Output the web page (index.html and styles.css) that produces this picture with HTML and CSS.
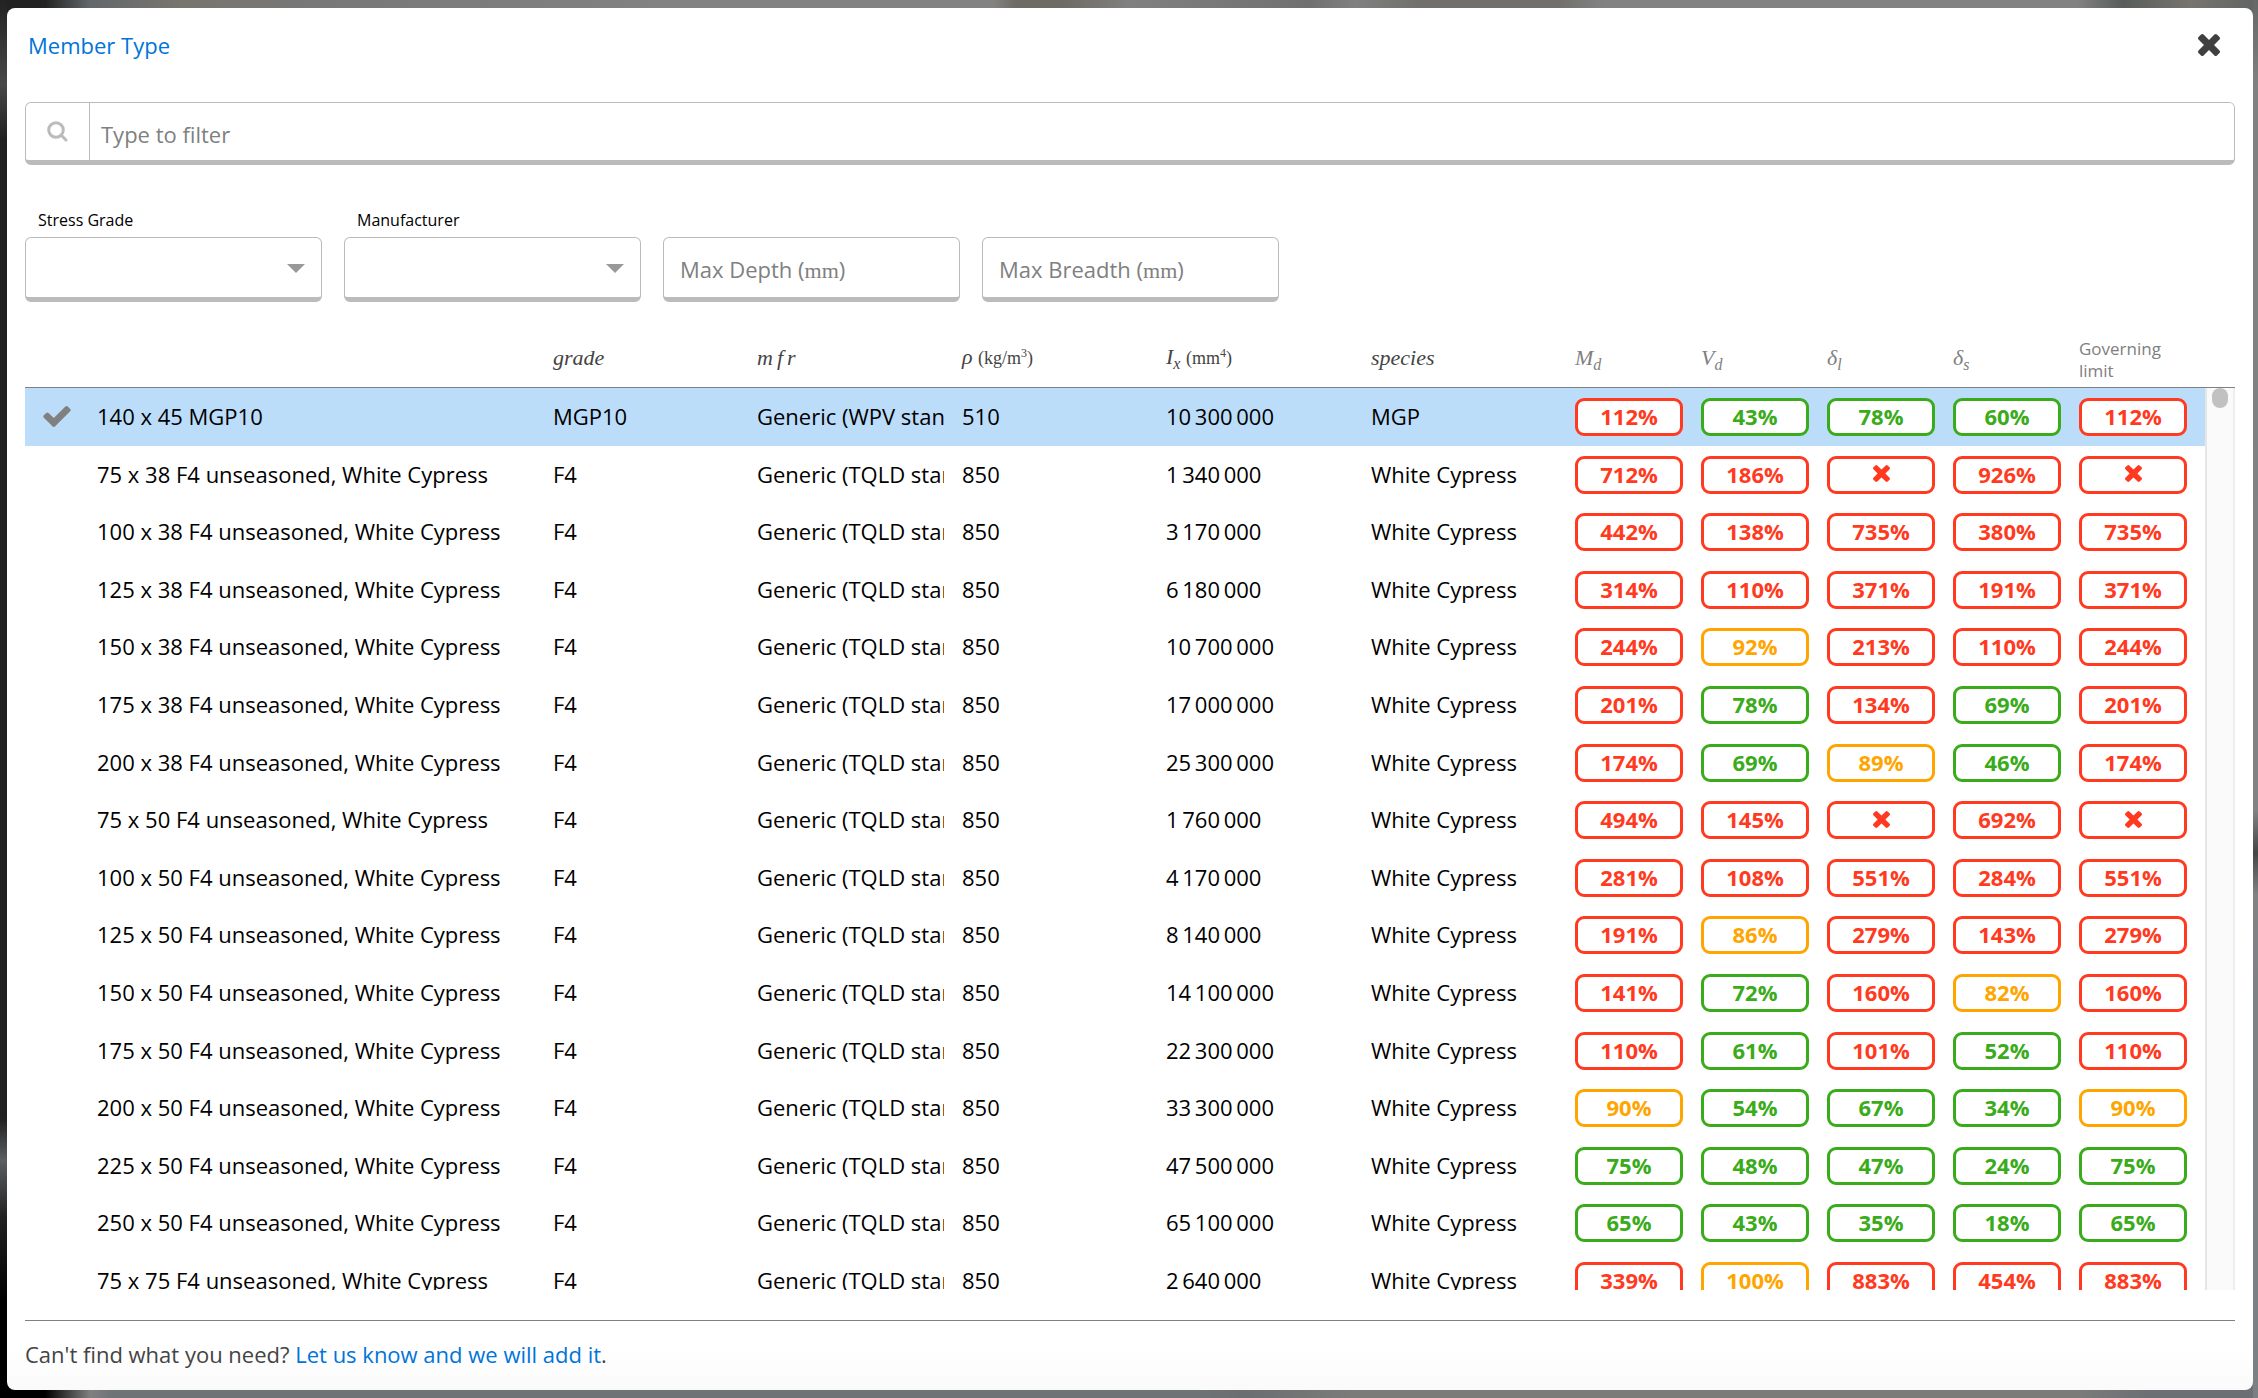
FILE: index.html
```html
<!DOCTYPE html>
<html lang="en">
<head>
<meta charset="utf-8">
<title>Member Type</title>
<link rel="stylesheet" href="styles.css">
</head>
<body>
<svg class="sprite" aria-hidden="true">
  <symbol id="times" viewBox="302 366 1188 1188"><path d="M1490 1322q0 40-28 68l-136 136q-28 28-68 28t-68-28l-294-294-294 294q-28 28-68 28t-68-28l-136-136q-28-28-28-68t28-68l294-294-294-294q-28-28-28-68t28-68l136-136q28-28 68-28t68 28l294 294 294-294q28-28 68-28t68 28l136 136q28 28 28 68t-28 68l-294 294 294 294q28 28 28 68z"/></symbol>
</svg>
<main class="modal" role="dialog" aria-labelledby="title">
  <header class="modal-header">
    <h1 id="title" class="title">Member Type</h1>
    <button type="button" class="close" aria-label="Close"><svg class="close-icon"><use href="#times"/></svg></button>
  </header>

  <div class="search">
    <label class="search-label" for="filter" aria-label="Filter">
      <svg class="search-icon" viewBox="0 0 21 21"><circle cx="9" cy="9" r="7.3"/><path d="M14.3 14.3 19 19"/></svg>
    </label>
    <input id="filter" class="search-input" type="text" placeholder="Type to filter">
  </div>

  <form class="filters">
    <div class="field">
      <label class="field-label" for="grade">Stress Grade</label>
      <div class="select-wrap"><select id="grade" class="control"><option></option></select></div>
    </div>
    <div class="field">
      <label class="field-label" for="mfr">Manufacturer</label>
      <div class="select-wrap"><select id="mfr" class="control"><option></option></select></div>
    </div>
    <div class="field">
      <input id="depth" class="control" type="text">
      <label class="inner-label" for="depth">Max Depth (<span class="unit">mm</span>)</label>
    </div>
    <div class="field">
      <input id="breadth" class="control" type="text">
      <label class="inner-label" for="breadth">Max Breadth (<span class="unit">mm</span>)</label>
    </div>
  </form>

  <section class="results">
    <table class="members">
      <colgroup><col class="c-check"><col><col class="c-text"><col class="c-mid"><col class="c-text"><col class="c-mid"><col class="c-text"><col class="c-chip"><col class="c-chip"><col class="c-chip"><col class="c-chip"><col class="c-chip"></colgroup>
      <thead>
        <tr><th></th><th></th><th><i>grade</i></th><th><i class="spaced"><span>m</span><span>f</span><span>r</span></i></th><th><i>ρ</i> <small>(kg/m<sup>3</sup>)</small></th><th><i>I<sub>x</sub></i> <small>(mm<sup>4</sup>)</small></th><th><i>species</i></th><th class="muted"><i>M<sub>d</sub></i></th><th class="muted"><i>V<sub>d</sub></i></th><th class="muted"><i>δ<sub>l</sub></i></th><th class="muted"><i>δ<sub>s</sub></i></th><th class="muted limit">Governing<br>limit</th></tr>
      </thead>
      <tbody>
        <tr class="selected"><td class="check"><svg class="check-icon" viewBox="121 334 1550 1188"><path d="M1671 566q0 40-28 68l-724 724-136 136q-28 28-68 28t-68-28l-136-136-362-362q-28-28-28-68t28-68l136-136q28-28 68-28t68 28l294 295 656-657q28-28 68-28t68 28l136 136q28 28 28 68z"/></svg></td><td>140 x 45 MGP10</td><td>MGP10</td><td><span class="clip">Generic (WPV standard)</span></td><td>510</td><td>10&#8198;300&#8198;000</td><td>MGP</td><td><b class="chip bad">112%</b></td><td><b class="chip ok">43%</b></td><td><b class="chip ok">78%</b></td><td><b class="chip ok">60%</b></td><td><b class="chip bad">112%</b></td></tr>
        <tr><td></td><td>75 x 38 F4 unseasoned, White Cypress</td><td>F4</td><td><span class="clip">Generic (TQLD standard)</span></td><td>850</td><td>1&#8198;340&#8198;000</td><td>White Cypress</td><td><b class="chip bad">712%</b></td><td><b class="chip bad">186%</b></td><td><b class="chip bad"><svg class="fail"><use href="#times"/></svg></b></td><td><b class="chip bad">926%</b></td><td><b class="chip bad"><svg class="fail"><use href="#times"/></svg></b></td></tr>
        <tr><td></td><td>100 x 38 F4 unseasoned, White Cypress</td><td>F4</td><td><span class="clip">Generic (TQLD standard)</span></td><td>850</td><td>3&#8198;170&#8198;000</td><td>White Cypress</td><td><b class="chip bad">442%</b></td><td><b class="chip bad">138%</b></td><td><b class="chip bad">735%</b></td><td><b class="chip bad">380%</b></td><td><b class="chip bad">735%</b></td></tr>
        <tr><td></td><td>125 x 38 F4 unseasoned, White Cypress</td><td>F4</td><td><span class="clip">Generic (TQLD standard)</span></td><td>850</td><td>6&#8198;180&#8198;000</td><td>White Cypress</td><td><b class="chip bad">314%</b></td><td><b class="chip bad">110%</b></td><td><b class="chip bad">371%</b></td><td><b class="chip bad">191%</b></td><td><b class="chip bad">371%</b></td></tr>
        <tr><td></td><td>150 x 38 F4 unseasoned, White Cypress</td><td>F4</td><td><span class="clip">Generic (TQLD standard)</span></td><td>850</td><td>10&#8198;700&#8198;000</td><td>White Cypress</td><td><b class="chip bad">244%</b></td><td><b class="chip warn">92%</b></td><td><b class="chip bad">213%</b></td><td><b class="chip bad">110%</b></td><td><b class="chip bad">244%</b></td></tr>
        <tr><td></td><td>175 x 38 F4 unseasoned, White Cypress</td><td>F4</td><td><span class="clip">Generic (TQLD standard)</span></td><td>850</td><td>17&#8198;000&#8198;000</td><td>White Cypress</td><td><b class="chip bad">201%</b></td><td><b class="chip ok">78%</b></td><td><b class="chip bad">134%</b></td><td><b class="chip ok">69%</b></td><td><b class="chip bad">201%</b></td></tr>
        <tr><td></td><td>200 x 38 F4 unseasoned, White Cypress</td><td>F4</td><td><span class="clip">Generic (TQLD standard)</span></td><td>850</td><td>25&#8198;300&#8198;000</td><td>White Cypress</td><td><b class="chip bad">174%</b></td><td><b class="chip ok">69%</b></td><td><b class="chip warn">89%</b></td><td><b class="chip ok">46%</b></td><td><b class="chip bad">174%</b></td></tr>
        <tr><td></td><td>75 x 50 F4 unseasoned, White Cypress</td><td>F4</td><td><span class="clip">Generic (TQLD standard)</span></td><td>850</td><td>1&#8198;760&#8198;000</td><td>White Cypress</td><td><b class="chip bad">494%</b></td><td><b class="chip bad">145%</b></td><td><b class="chip bad"><svg class="fail"><use href="#times"/></svg></b></td><td><b class="chip bad">692%</b></td><td><b class="chip bad"><svg class="fail"><use href="#times"/></svg></b></td></tr>
        <tr><td></td><td>100 x 50 F4 unseasoned, White Cypress</td><td>F4</td><td><span class="clip">Generic (TQLD standard)</span></td><td>850</td><td>4&#8198;170&#8198;000</td><td>White Cypress</td><td><b class="chip bad">281%</b></td><td><b class="chip bad">108%</b></td><td><b class="chip bad">551%</b></td><td><b class="chip bad">284%</b></td><td><b class="chip bad">551%</b></td></tr>
        <tr><td></td><td>125 x 50 F4 unseasoned, White Cypress</td><td>F4</td><td><span class="clip">Generic (TQLD standard)</span></td><td>850</td><td>8&#8198;140&#8198;000</td><td>White Cypress</td><td><b class="chip bad">191%</b></td><td><b class="chip warn">86%</b></td><td><b class="chip bad">279%</b></td><td><b class="chip bad">143%</b></td><td><b class="chip bad">279%</b></td></tr>
        <tr><td></td><td>150 x 50 F4 unseasoned, White Cypress</td><td>F4</td><td><span class="clip">Generic (TQLD standard)</span></td><td>850</td><td>14&#8198;100&#8198;000</td><td>White Cypress</td><td><b class="chip bad">141%</b></td><td><b class="chip ok">72%</b></td><td><b class="chip bad">160%</b></td><td><b class="chip warn">82%</b></td><td><b class="chip bad">160%</b></td></tr>
        <tr><td></td><td>175 x 50 F4 unseasoned, White Cypress</td><td>F4</td><td><span class="clip">Generic (TQLD standard)</span></td><td>850</td><td>22&#8198;300&#8198;000</td><td>White Cypress</td><td><b class="chip bad">110%</b></td><td><b class="chip ok">61%</b></td><td><b class="chip bad">101%</b></td><td><b class="chip ok">52%</b></td><td><b class="chip bad">110%</b></td></tr>
        <tr><td></td><td>200 x 50 F4 unseasoned, White Cypress</td><td>F4</td><td><span class="clip">Generic (TQLD standard)</span></td><td>850</td><td>33&#8198;300&#8198;000</td><td>White Cypress</td><td><b class="chip warn">90%</b></td><td><b class="chip ok">54%</b></td><td><b class="chip ok">67%</b></td><td><b class="chip ok">34%</b></td><td><b class="chip warn">90%</b></td></tr>
        <tr><td></td><td>225 x 50 F4 unseasoned, White Cypress</td><td>F4</td><td><span class="clip">Generic (TQLD standard)</span></td><td>850</td><td>47&#8198;500&#8198;000</td><td>White Cypress</td><td><b class="chip ok">75%</b></td><td><b class="chip ok">48%</b></td><td><b class="chip ok">47%</b></td><td><b class="chip ok">24%</b></td><td><b class="chip ok">75%</b></td></tr>
        <tr><td></td><td>250 x 50 F4 unseasoned, White Cypress</td><td>F4</td><td><span class="clip">Generic (TQLD standard)</span></td><td>850</td><td>65&#8198;100&#8198;000</td><td>White Cypress</td><td><b class="chip ok">65%</b></td><td><b class="chip ok">43%</b></td><td><b class="chip ok">35%</b></td><td><b class="chip ok">18%</b></td><td><b class="chip ok">65%</b></td></tr>
        <tr><td></td><td>75 x 75 F4 unseasoned, White Cypress</td><td>F4</td><td><span class="clip">Generic (TQLD standard)</span></td><td>850</td><td>2&#8198;640&#8198;000</td><td>White Cypress</td><td><b class="chip bad">339%</b></td><td><b class="chip warn">100%</b></td><td><b class="chip bad">883%</b></td><td><b class="chip bad">454%</b></td><td><b class="chip bad">883%</b></td></tr>
      </tbody>
    </table>
    <div class="gutter" aria-hidden="true">
      <div class="gutter-head"></div>
      <div class="track"><div class="thumb"></div></div>
    </div>
  </section>

  <footer class="modal-footer">Can't find what you need? <a href="#add">Let us know and we will add it</a>.</footer>
</main>
</body>
</html>
```
FILE: styles.css
```css
* { box-sizing: border-box; }

body {
  margin: 0;
  height: 100vh;
  padding: 8px 5px 8px 7px;
  display: flex;
  overflow: hidden;
  font: 22px/30px "Open Sans", "Noto Sans", sans-serif;
  color: #444;
  background:
    linear-gradient(#222 0, #484848 6%, #202020 10%, #202020 80%, #5a5e60 83%, #222 87%, #000 93%) left / 7px 100% no-repeat,
    linear-gradient(#646866 0, #808080 6%, #808284 58%, #444646 61%, #808284 64%, #7a8084 100%) right / 5px 100% no-repeat,
    linear-gradient(90deg, #222 0, #222 2%, #63686c 4%, #78746e 8%, #777 13%, #828282 30%, #828282 44%, #6e6a64 45%, #6e6a64 47%, #808080 50%, #707070 58%, #808080 60%, #706f6c 63%, #706f6c 69%, #828282 71%, #828282 92%, #585c5a 94%, #77746f 97%, #606462 100%) top / 100% 16px no-repeat,
    linear-gradient(90deg, #000 0, #000 2%, #808080 4%, #6e7376 5%, #6e7376 53%, #6a6e70 55%, #7b7b7a 60%, #7b7b7a 92%, #6c7074 95%, #6c7074 100%) bottom / 100% 16px no-repeat;
}

.sprite { position: absolute; width: 0; height: 0; }
svg { display: block; fill: currentColor; }

.modal {
  flex: 1;
  min-width: 0;
  display: flex;
  flex-direction: column;
  padding: 0 18px;
  border-radius: 8px;
  background: linear-gradient(#fff calc(100% - 40px), #fafafa);
}

.modal-header {
  display: flex;
  justify-content: space-between;
  align-items: center;
  padding: 22px 15px 0 3px;
  margin-bottom: 42px;
}
.title { margin: 0; font-size: 22px; font-weight: 400; line-height: 30px; color: #0074d9; }
.close { padding: 0; border: 0; background: none; color: #404040; cursor: pointer; }
.close-icon { width: 22px; height: 22px; }

.search {
  display: flex;
  height: 63px;
  border: 1px solid #bbb;
  border-bottom-width: 5px;
  border-radius: 6px;
  overflow: hidden;
  flex: none;
}
.search-label {
  width: 64px;
  display: flex;
  align-items: center;
  justify-content: center;
  border-right: 1px solid #bbb;
}
.search-icon { width: 21px; height: 21px; fill: none; stroke: #bbb; stroke-width: 3; stroke-linecap: round; }
.search-input {
  flex: 1;
  border: 0;
  padding: 4px 12px 0 11px;
  font: inherit;
  background: #fff;
  outline: 0;
}
.search-input::placeholder { color: #808080; opacity: 1; }

.filters {
  display: grid;
  grid-template-columns: repeat(4, 297px);
  column-gap: 22px;
  align-items: end;
  margin-top: 44px;
}
.field { position: relative; }
.field-label { display: block; padding-left: 13px; margin-bottom: 6px; font-size: 16px; line-height: 22px; color: #000; }
.control {
  display: block;
  width: 100%;
  height: 65px;
  padding: 0 16px;
  border: 1px solid #bbb;
  border-bottom-width: 5px;
  border-radius: 6px;
  background: #fff;
  font: inherit;
  appearance: none;
  outline: 0;
}
.select-wrap { position: relative; }
.select-wrap::after {
  content: "";
  position: absolute;
  right: 17px;
  top: 27px;
  border: 9px solid transparent;
  border-top-color: #999;
  border-bottom: 0;
  pointer-events: none;
}
.inner-label { position: absolute; left: 17px; top: 17px; color: #808080; }
.unit { font-family: "Liberation Serif", serif; }

.results {
  flex: 1;
  min-height: 0;
  overflow: hidden;
  display: grid;
  grid-template-columns: minmax(0, 1fr) 30px;
  grid-template-rows: 100%;
}
.members { width: 100%; table-layout: fixed; border-collapse: separate; border-spacing: 0; align-self: start; }
.c-check { width: 72px; }
.c-text { width: 204px; }
.c-mid { width: 205px; }
.c-chip { width: 126px; }

th {
  height: 86px;
  padding: 0 0 14px;
  border-bottom: 1px solid #808080;
  vertical-align: bottom;
  text-align: left;
  font: 22px/30px "Liberation Serif", serif;
  color: #444;
  white-space: nowrap;
}
th small { font-size: 18px; }
th sub, th sup { font-size: 16px; line-height: 0; }
th small sup { font-size: 12px; }
.spaced { display: inline-flex; gap: 4px; }
.muted { color: #808080; }
.limit { padding-bottom: 5px; font: 17px/22px "Open Sans", "Noto Sans", sans-serif; }

td { height: 58px; padding: 0 0 2px; color: #000; white-space: nowrap; }
td:nth-child(n + 8) { padding: 0; }
tr:nth-child(5n + 2) td, tr:nth-child(5n + 4) td { height: 57px; }
.selected td { background: #bcddfa; }
.check { color: #808080; }
.check-icon { width: 28px; height: 21px; margin-left: 18px; }
.clip { display: block; overflow: hidden; margin-right: 18px; }

.chip {
  display: flex;
  align-items: center;
  justify-content: center;
  width: 108px;
  height: 38px;
  padding-bottom: 2px;
  border: 3px solid;
  border-radius: 9px;
  background: #fff;
}
.fail { width: 17px; height: 17px; }
.bad { color: #ff3a21; }
.ok { color: #3aab1a; }
.warn { color: #ffa500; }

.gutter { display: flex; flex-direction: column; }
.gutter-head { height: 86px; border-bottom: 1px solid #808080; }
.track { flex: 1; background: #fafafa; border-left: 2px solid #e6e6e6; border-right: 2px solid #eee; }
.thumb { width: 16px; height: 20px; margin: 0 auto; border-radius: 8px; background: #c1c1c1; }

.modal-footer { margin-top: 30px; padding: 18px 0 21px; border-top: 1px solid #808080; }
.modal-footer a { color: #0074d9; text-decoration: none; }
```
